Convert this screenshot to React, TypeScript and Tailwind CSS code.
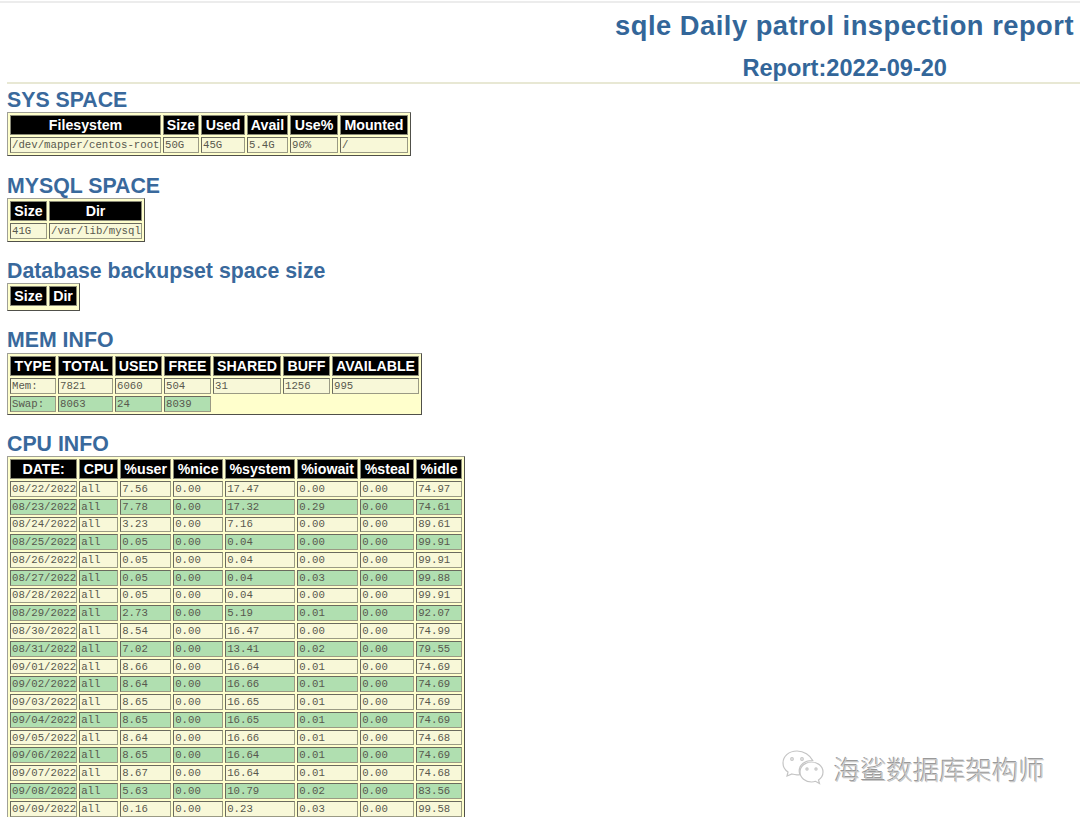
import React from "react";

type Col = { label: string; w: string };

const SYS_COLS: Col[] = [
  { label: "Filesystem", w: "w-[151px]" },
  { label: "Size", w: "w-[36px]" },
  { label: "Used", w: "w-[44px]" },
  { label: "Avail", w: "w-[41px]" },
  { label: "Use%", w: "w-[48px]" },
  { label: "Mounted", w: "w-[68px]" },
];

const MYSQL_COLS: Col[] = [
  { label: "Size", w: "w-[37px]" },
  { label: "Dir", w: "w-[93px]" },
];

const BACKUP_COLS: Col[] = [
  { label: "Size", w: "w-[37px]" },
  { label: "Dir", w: "w-[28px]" },
];

const MEM_COLS: Col[] = [
  { label: "TYPE", w: "w-[46px]" },
  { label: "TOTAL", w: "w-[55px]" },
  { label: "USED", w: "w-[47px]" },
  { label: "FREE", w: "w-[47px]" },
  { label: "SHARED", w: "w-[68px]" },
  { label: "BUFF", w: "w-[47px]" },
  { label: "AVAILABLE", w: "w-[87px]" },
];

const CPU_COLS: Col[] = [
  { label: "DATE:", w: "w-[67px]" },
  { label: "CPU", w: "w-[39px]" },
  { label: "%user", w: "w-[51px]" },
  { label: "%nice", w: "w-[50px]" },
  { label: "%system", w: "w-[70px]" },
  { label: "%iowait", w: "w-[61px]" },
  { label: "%steal", w: "w-[54px]" },
  { label: "%idle", w: "w-[46px]" },
];

const CPU_ROWS = [
  ["08/22/2022", "all", "7.56", "0.00", "17.47", "0.00", "0.00", "74.97"],
  ["08/23/2022", "all", "7.78", "0.00", "17.32", "0.29", "0.00", "74.61"],
  ["08/24/2022", "all", "3.23", "0.00", "7.16", "0.00", "0.00", "89.61"],
  ["08/25/2022", "all", "0.05", "0.00", "0.04", "0.00", "0.00", "99.91"],
  ["08/26/2022", "all", "0.05", "0.00", "0.04", "0.00", "0.00", "99.91"],
  ["08/27/2022", "all", "0.05", "0.00", "0.04", "0.03", "0.00", "99.88"],
  ["08/28/2022", "all", "0.05", "0.00", "0.04", "0.00", "0.00", "99.91"],
  ["08/29/2022", "all", "2.73", "0.00", "5.19", "0.01", "0.00", "92.07"],
  ["08/30/2022", "all", "8.54", "0.00", "16.47", "0.00", "0.00", "74.99"],
  ["08/31/2022", "all", "7.02", "0.00", "13.41", "0.02", "0.00", "79.55"],
  ["09/01/2022", "all", "8.66", "0.00", "16.64", "0.01", "0.00", "74.69"],
  ["09/02/2022", "all", "8.64", "0.00", "16.66", "0.01", "0.00", "74.69"],
  ["09/03/2022", "all", "8.65", "0.00", "16.65", "0.01", "0.00", "74.69"],
  ["09/04/2022", "all", "8.65", "0.00", "16.65", "0.01", "0.00", "74.69"],
  ["09/05/2022", "all", "8.64", "0.00", "16.66", "0.01", "0.00", "74.68"],
  ["09/06/2022", "all", "8.65", "0.00", "16.64", "0.01", "0.00", "74.69"],
  ["09/07/2022", "all", "8.67", "0.00", "16.64", "0.01", "0.00", "74.68"],
  ["09/08/2022", "all", "5.63", "0.00", "10.79", "0.02", "0.00", "83.56"],
  ["09/09/2022", "all", "0.16", "0.00", "0.23", "0.03", "0.00", "99.58"],
];

const ReportTable = ({
  cols,
  rows = [],
  rowH = "h-[16px]",
  className = "",
}: {
  cols: Col[];
  rows?: string[][];
  rowH?: string;
  className?: string;
}) => (
  <table
    className={`table-fixed border-separate border-spacing-[2px] border border-t-[#a0a098] border-l-[#a0a098] border-r-[#50504a] border-b-[#50504a] bg-[#ffffcc] ${className}`}
  >
    <thead>
      <tr>
        {cols.map((col) => (
          <th
            key={col.label}
            className={`${col.w} h-[20px] bg-black border border-[#8a8a78] p-0 pb-px text-center align-middle text-[14.2px] leading-[16px] font-bold text-white whitespace-nowrap`}
          >
            {col.label}
          </th>
        ))}
      </tr>
    </thead>
    <tbody>
      {rows.map((row, i) => (
        <tr key={row[0] + i}>
          {row.map((cell, j) => (
            <td
              key={j}
              className={`${rowH} border border-t-[#6a6a5e] border-l-[#6a6a5e] border-r-[#9a9a84] border-b-[#9a9a84] p-0 pl-px align-middle font-['Liberation_Mono',monospace] text-[10.7px] leading-[12px] text-[#58584e] whitespace-nowrap overflow-hidden ${
                i % 2 === 0 ? "bg-[#f8f8d8]" : "bg-[#b0dfb0]"
              }`}
            >
              {cell}
            </td>
          ))}
        </tr>
      ))}
    </tbody>
  </table>
);

const SectionTitle = ({ children, className = "" }: { children: React.ReactNode; className?: string }) => (
  <h2 className={`text-[21.3px] leading-[24px] font-bold text-[#39699c] ${className}`}>{children}</h2>
);

const Watermark = () => (
  <div className="absolute left-[782px] top-[750px] flex items-center gap-[9px]">
    <svg width="43" height="38" viewBox="0 0 43 38" fill="none" stroke="#c4c4c4" strokeWidth="1.2">
      <path d="M15 1C7 1 1 6 1 13c0 4 2 7 5 9l-1 4 5-2c2 .6 3 .8 5 .8 1 0 2 0 3-.2-.6-1.400-.8-2.600-.8-3.600 0-6 5.500-10.500 12.500-10.500h1C28 5 22 1 15 1Z" fill="#fff" />
      <path d="M41 22c0-6-5.500-10-11.500-10S18 16 18 22s5.500 10 11.500 10c1.500 0 3-.3 4-.7l4 2.200-1-3.500c3-2 4.500-5 4.500-8Z" fill="#fff" />
      <circle cx="10" cy="9" r="1.300" />
      <circle cx="20" cy="9" r="1.300" />
      <circle cx="25" cy="19" r="1.100" />
      <circle cx="34" cy="19" r="1.100" />
    </svg>
    <span className="font-['Noto_Sans_CJK_SC',sans-serif] text-[26.400px] leading-[38px] font-light text-[#c8c8c8] [text-shadow:-1px_-1px_0_#999999] whitespace-nowrap">
      海鲨数据库架构师
    </span>
  </div>
);

export default function App() {
  return (
    <div className="relative h-[817px] overflow-hidden bg-white font-['Liberation_Sans',Arial,sans-serif]">
      <div className="mt-px border-t-2 border-[#ececec]" />
      <h1 className="pt-[7px] pr-[6px] text-right text-[27.3px] leading-[32px] font-bold tracking-[0.5px] text-[#336699]">
        sqle Daily patrol inspection report
      </h1>
      <div className="pt-[12px] pr-[133px] text-right text-[23.6px] leading-[28px] font-bold text-[#336699]">
        Report:2022-09-20
      </div>
      <div className="ml-[7px] border-t-2 border-[#e8e8d4]" />

      <main className="px-[7px] pt-[4px]">
        <SectionTitle>SYS SPACE</SectionTitle>
        <ReportTable cols={SYS_COLS} rows={[["/dev/mapper/centos-root", "50G", "45G", "5.4G", "90%", "/"]]} />

        <SectionTitle className="mt-[18px]">MYSQL SPACE</SectionTitle>
        <ReportTable cols={MYSQL_COLS} rows={[["41G", "/var/lib/mysql"]]} />

        <SectionTitle className="mt-[17px]">Database backupset space size</SectionTitle>
        <ReportTable cols={BACKUP_COLS} className="pb-[2px]" />

        <SectionTitle className="mt-[17px] mb-px">MEM INFO</SectionTitle>
        <ReportTable
          cols={MEM_COLS}
          rows={[
            ["Mem:", "7821", "6060", "504", "31", "1256", "995"],
            ["Swap:", "8063", "24", "8039"],
          ]}
        />

        <SectionTitle className="mt-[17px]">CPU INFO</SectionTitle>
        <ReportTable cols={CPU_COLS} rows={CPU_ROWS} rowH="h-[15.78px]" />
      </main>

      <Watermark />
    </div>
  );
}
